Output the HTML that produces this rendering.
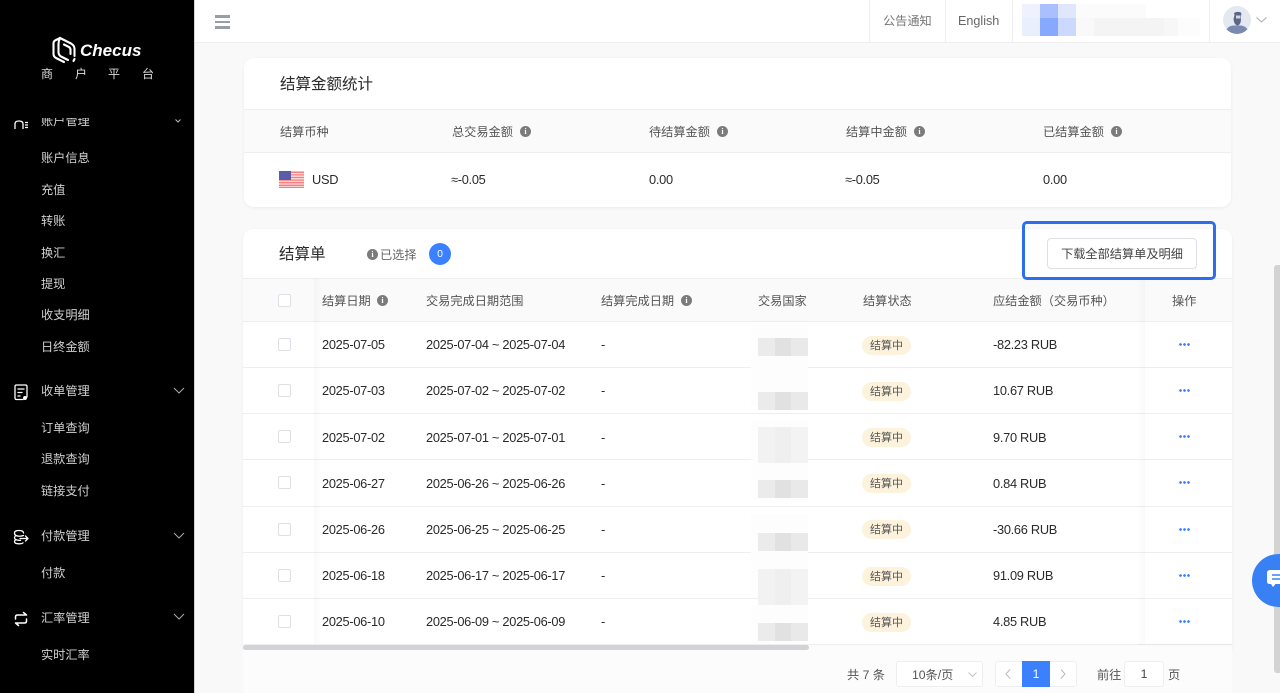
<!DOCTYPE html>
<html lang="zh-CN"><head><meta charset="utf-8"><title>结算单</title>
<style>
*{box-sizing:border-box;margin:0;padding:0}
html,body{width:1280px;height:693px;overflow:hidden;background:#f9f9f9;font-family:"Liberation Sans","Noto Sans CJK SC",sans-serif;font-size:12.2px;color:#2a2a2a}
.a{position:absolute}
.t{position:absolute;white-space:nowrap;line-height:16px;transform:translateY(-7px)}
.r .t,.n{font-size:12.8px;letter-spacing:-.28px}
#side{left:0;top:0;width:194px;height:693px;background:#000;color:#c8c8c8}
#side .t{color:#d0d0d0}
#clip{left:0;top:118px;width:194px;height:575px;overflow:hidden}
#hdr{left:195px;top:0;width:1085px;height:43px;background:#fff;border-bottom:1px solid #eee}
.div{position:absolute;top:0;width:1px;height:42px;background:#eee}
.bl{position:absolute}
.card{position:absolute;background:#fff;border-radius:10px;box-shadow:0 1px 3px rgba(0,0,0,.06)}
.th{color:#555}
.info{position:absolute;width:11px;height:11px;border-radius:50%;background:#7b7b7d;color:#fff;font:bold 8px/11px "Liberation Serif",serif;text-align:center}
.line{position:absolute;left:243px;width:989px;height:1px;background:#eeeeee}
.cb{position:absolute;left:278px;width:13px;height:13px;border:1px solid #dfe0e5;border-radius:2px;background:#fff}
.badge{position:absolute;left:862px;width:49px;height:19px;border-radius:10px;background:#fdf3dd;color:#555;font-size:11px;line-height:20px;text-align:center}
.dots{position:absolute;left:1179px;width:11px;height:3px;background:radial-gradient(circle at 1.5px 1.5px,#3a80ff 1.2px,transparent 1.5px) 0 0/4px 3px repeat-x}
.gr{position:absolute;left:758px;width:50px;background:linear-gradient(90deg,#ebebeb 0,#ebebeb 17px,#e1e1e1 17px,#e1e1e1 33px,#e9e9e9 33px)}
.gl{position:absolute;left:758px;width:50px;background:linear-gradient(90deg,#f2f2f2 0,#f2f2f2 17px,#efefef 17px,#efefef 33px,#f3f3f3 33px)}
.halo{position:absolute;left:751px;width:57px;background:#fdfdfd}
.pg{position:absolute;background:#fff;border:1px solid #eeeef0;border-radius:3px}
</style></head><body>

<div class="a" id="side">
<svg class="a" style="left:51px;top:36px" width="26" height="28" viewBox="0 0 26 28" fill="none" stroke="#fff" stroke-width="2.100" stroke-linejoin="round" stroke-linecap="round"><path d="M9 2 L20 7.500 Q23.500 9.500 23.500 13 V20"/><path d="M13 26 L5 22 Q2.500 20.500 2.500 18 V7.500 Q2.500 5 5 4 L9 2"/><path d="M9 2 Q7.500 5 7.500 8 V16 Q7.500 19 10 20.500 L17 24"/><path d="M13 8.500 L18 11 Q19.500 12 19.500 14 V18"/><path d="M23.500 23 L22.500 25"/></svg>
<div class="t" style="left:80px;top:50px;font:italic bold 17px/16px 'Liberation Sans',sans-serif;color:#fff">Checus</div>
<div class="t" style="left:41px;top:73px;color:#ddd;font-size:12px">商</div>
<div class="t" style="left:75px;top:73px;color:#ddd;font-size:12px">户</div>
<div class="t" style="left:108px;top:73px;color:#ddd;font-size:12px">平</div>
<div class="t" style="left:142px;top:73px;color:#ddd;font-size:12px">台</div>

<div class="a" id="clip">
 <svg class="a" style="left:14px;top:0" width="14" height="11" viewBox="0 0 14 11" fill="none" stroke="#fff" stroke-width="1.300"><path d="M1 11 V6 Q1 3 5 3 Q9 3 9 6 V11"/><path d="M11 4.500 h3 M11 7 h3 M11 9.500 h3"/></svg>
 <div class="t" style="left:41px;top:2px">账户管理</div>
 <svg class="a" style="left:175px;top:1px" width="6" height="4" viewBox="0 0 6 4" fill="none" stroke="#bbb"><path d="M.5 .5 3 3 5.500 .5"/></svg>
</div>
<div class="t" style="left:41px;top:157px">账户信息</div>
<div class="t" style="left:41px;top:189px">充值</div>
<div class="t" style="left:41px;top:220px">转账</div>
<div class="t" style="left:41px;top:252px">换汇</div>
<div class="t" style="left:41px;top:283px">提现</div>
<div class="t" style="left:41px;top:314px">收支明细</div>
<div class="t" style="left:41px;top:346px">日终金额</div>

<svg class="a" style="left:14px;top:384px" width="14" height="17" viewBox="0 0 14 17" fill="none" stroke="#fff" stroke-width="1.300" stroke-linecap="round" stroke-linejoin="round"><path d="M9 15.500 H2.500 Q1 15.500 1 14 V2.500 Q1 1 2.500 1 H11.500 Q13 1 13 2.500 V13"/><path d="M4 5 H10 M4 8.500 H8 M4 12 H6"/><circle cx="11" cy="14" r="1.300" fill="#fff"/></svg>
<div class="t" style="left:41px;top:390px">收单管理</div>
<svg class="a" style="left:173px;top:387px" width="12" height="7" viewBox="0 0 12 7" fill="none" stroke="#aaa"><path d="M1 1 6 6 11 1"/></svg>
<div class="t" style="left:41px;top:427px">订单查询</div>
<div class="t" style="left:41px;top:458px">退款查询</div>
<div class="t" style="left:41px;top:490px">链接支付</div>

<svg class="a" style="left:13px;top:529px" width="16" height="16" viewBox="0 0 16 16" fill="none" stroke="#fff" stroke-width="1.300" stroke-linecap="round"><path d="M10.500 4 Q10.500 1.500 6 1.500 T1.500 4 Q1.500 6 3 6.500 Q1.500 7.500 1.500 8.500 Q1.500 10 3 10.800 Q1.500 11.500 1.500 12.500 Q1.500 14.800 6 14.800 Q9 14.800 10 13.800"/><path d="M3 6.500 Q6 8 10.500 6.500 M3 10.800 Q5 11.500 7.500 11.300 M7 9.500 H15 M12.500 7 L15 9.500 L12.500 12"/></svg>
<div class="t" style="left:41px;top:535px">付款管理</div>
<svg class="a" style="left:173px;top:532px" width="12" height="7" viewBox="0 0 12 7" fill="none" stroke="#aaa"><path d="M1 1 6 6 11 1"/></svg>
<div class="t" style="left:41px;top:572px">付款</div>

<svg class="a" style="left:14px;top:611px" width="14" height="16" viewBox="0 0 14 16" fill="none" stroke="#fff" stroke-width="1.500" stroke-linecap="round" stroke-linejoin="round"><path d="M1.500 8 V6 Q1.500 4 3.500 4 H12.500 L9.500 1.500"/><path d="M12.500 8 V10 Q12.500 12 10.500 12 H1.500 L4.500 14.500"/></svg>
<div class="t" style="left:41px;top:617px">汇率管理</div>
<svg class="a" style="left:173px;top:613px" width="12" height="7" viewBox="0 0 12 7" fill="none" stroke="#aaa"><path d="M1 1 6 6 11 1"/></svg>
<div class="t" style="left:41px;top:654px">实时汇率</div>
</div>
<div class="a" style="left:194px;top:0;width:1px;height:693px;background:#d5d5d5"></div>

<div class="a" id="hdr"></div>
<div class="a" style="left:215px;top:15px;width:15px;height:2.500px;background:#9b9da6"></div>
<div class="a" style="left:215px;top:20.500px;width:15px;height:2.500px;background:#9b9da6"></div>
<div class="a" style="left:215px;top:26px;width:15px;height:2.500px;background:#9b9da6"></div>
<div class="div" style="left:869px"></div><div class="div" style="left:945px"></div><div class="div" style="left:1012px"></div><div class="div" style="left:1209px"></div>
<div class="t" style="left:883px;top:19.500px;color:#777">公告通知</div>
<div class="t" style="left:958px;top:19.500px;color:#666;font-size:12.600px">English</div>
<div class="bl" style="left:1022px;top:4px;width:18px;height:14px;background:#eff2fe"></div>
<div class="bl" style="left:1040px;top:4px;width:18px;height:14px;background:#a9c0fd"></div>
<div class="bl" style="left:1058px;top:4px;width:18px;height:14px;background:#e0e7fd"></div>
<div class="bl" style="left:1076px;top:4px;width:70px;height:14px;background:#fbfbfb"></div>
<div class="bl" style="left:1022px;top:18px;width:18px;height:18px;background:#eaeffe"></div>
<div class="bl" style="left:1040px;top:18px;width:18px;height:18px;background:#86a8ff"></div>
<div class="bl" style="left:1058px;top:18px;width:18px;height:18px;background:#ccd8fd"></div>
<div class="bl" style="left:1076px;top:18px;width:18px;height:18px;background:#f9f9f9"></div>
<div class="bl" style="left:1094px;top:18px;width:70px;height:18px;background:#f4f4f4"></div>
<div class="bl" style="left:1164px;top:18px;width:14px;height:18px;background:#f7f7f7"></div>
<div class="bl" style="left:1178px;top:18px;width:22px;height:18px;background:#fcfcfc"></div>
<svg class="a" style="left:1223px;top:6px" width="28" height="28" viewBox="0 0 28 28"><defs><clipPath id="c"><circle cx="14" cy="14" r="14"/></clipPath></defs><g clip-path="url(#c)"><rect width="28" height="28" fill="#e4e8f0"/><path d="M2 28 Q3 20.500 10 19.500 L18 19.500 Q25 20.500 26 28Z" fill="#7a89af"/><path d="M11 7 Q14 5 18 6.500 L18.500 9 H11.500Z" fill="#5b6789"/><path d="M11.500 9 H18 V13 Q18 19 14.500 19.500 Q11 19 10.500 13Z" fill="#5b6789"/><path d="M13 9.500 H17.500 V12.500 H13Z" fill="#d3d7e0"/></g></svg>
<svg class="a" style="left:1256px;top:17px" width="11" height="6" viewBox="0 0 11 6" fill="none" stroke="#aaa"><path d="M.5 .5 5.500 5 10.500 .5"/></svg>

<div class="card" style="left:244px;top:58px;width:987px;height:149px"></div>
<div class="a" style="left:244px;top:109px;width:987px;height:44px;background:#fafafa;border-top:1px solid #efefef;border-bottom:1px solid #efefef"></div>
<div class="t" style="left:280px;top:83.500px;font-size:15.500px;color:#2a2a2a">结算金额统计</div>
<div class="t th" style="left:280px;top:130.500px">结算币种</div>
<div class="t th" style="left:452px;top:130.500px">总交易金额</div><div class="info" style="left:520px;top:126px">i</div>
<div class="t th" style="left:649px;top:130.500px">待结算金额</div><div class="info" style="left:717px;top:126px">i</div>
<div class="t th" style="left:846px;top:130.500px">结算中金额</div><div class="info" style="left:914px;top:126px">i</div>
<div class="t th" style="left:1043px;top:130.500px">已结算金额</div><div class="info" style="left:1111px;top:126px">i</div>
<svg class="a" style="left:279px;top:171px" width="25" height="17" viewBox="0 0 25 17"><rect width="25" height="17" fill="#fbdcdc"/><path d="M0 1.300H25M0 3.900H25M0 6.500H25M0 9.100H25M0 11.700H25M0 14.300H25M0 16.500H25" stroke="#f47f80" stroke-width="1.300"/><rect width="12" height="9" fill="#5a5ea8"/></svg>
<div class="t n" style="left:312px;top:179px">USD</div>
<div class="t n" style="left:451px;top:179px">≈-0.05</div>
<div class="t n" style="left:649px;top:179px">0.00</div>
<div class="t n" style="left:845px;top:179px">≈-0.05</div>
<div class="t n" style="left:1043px;top:179px">0.00</div>

<div class="card" style="left:243px;top:229px;width:989px;height:420px;border-radius:10px 10px 0 0"></div>
<div class="a" style="left:243px;top:645px;width:989px;height:48px;background:#fcfcfc"></div>
<div class="t" style="left:279px;top:253.500px;font-size:15.500px;color:#2a2a2a">结算单</div>
<div class="info" style="left:367px;top:249px">i</div>
<div class="t" style="left:380px;top:253.500px;color:#666">已选择</div>
<div class="a" style="left:429px;top:243px;width:22px;height:22px;border-radius:50%;background:#3a80ff;color:#fff;font-size:10.500px;line-height:22px;text-align:center">0</div>

<div class="a" style="left:243px;top:278px;width:989px;height:44px;background:#fafafa;border-top:1px solid #eee;border-bottom:1px solid #eee"></div>
<div class="line" style="top:367px"></div><div class="line" style="top:413px"></div><div class="line" style="top:459px"></div><div class="line" style="top:506px"></div><div class="line" style="top:552px"></div><div class="line" style="top:598px"></div><div class="line" style="top:644px"></div>

<div class="a" style="left:314px;top:279px;width:8px;height:365px;background:linear-gradient(90deg,rgba(0,0,0,.025),rgba(0,0,0,0))"></div>
<div class="a" style="left:1137px;top:279px;width:8px;height:365px;background:linear-gradient(270deg,rgba(0,0,0,.025),rgba(0,0,0,0))"></div>
<div class="a" style="left:1138px;top:644px;width:94px;height:2px;background:linear-gradient(180deg,rgba(0,0,0,.04),rgba(0,0,0,0))"></div>

<div class="halo" style="top:325px;height:80px"></div><div class="halo" style="top:420px;height:80px"></div><div class="halo" style="top:515px;height:80px"></div><div class="halo" style="top:605px;height:39px"></div>
<div class="gr" style="top:338px;height:18px"></div>
<div class="gr" style="top:392px;height:18px"></div>
<div class="gl" style="top:427px;height:36px"></div>
<div class="gr" style="top:480px;height:18px"></div>
<div class="gr" style="top:533px;height:18px"></div>
<div class="gl" style="top:569px;height:36px"></div>
<div class="gr" style="top:623px;height:18px"></div>

<div class="cb" style="top:294px"></div>
<div class="t th" style="left:322px;top:299.500px">结算日期</div><div class="info" style="left:377px;top:295px">i</div>
<div class="t th" style="left:426px;top:299.500px">交易完成日期范围</div>
<div class="t th" style="left:601px;top:299.500px">结算完成日期</div><div class="info" style="left:681px;top:295px">i</div>
<div class="t th" style="left:758px;top:299.500px">交易国家</div>
<div class="t th" style="left:863px;top:299.500px">结算状态</div>
<div class="t th" style="left:993px;top:299.500px">应结金额（交易币种）</div>
<div class="t th" style="left:1172px;top:299.500px">操作</div>

<div class="r"><div class="cb" style="top:338px"></div><div class="t" style="left:322px;top:344px">2025-07-05</div><div class="t" style="left:426px;top:344px">2025-07-04 ~ 2025-07-04</div><div class="t" style="left:601px;top:344px">-</div><div class="badge" style="top:336px">结算中</div><div class="t" style="left:993px;top:344px">-82.23 RUB</div><div class="dots" style="top:343px"></div></div>
<div class="r"><div class="cb" style="top:384px"></div><div class="t" style="left:322px;top:390px">2025-07-03</div><div class="t" style="left:426px;top:390px">2025-07-02 ~ 2025-07-02</div><div class="t" style="left:601px;top:390px">-</div><div class="badge" style="top:382px">结算中</div><div class="t" style="left:993px;top:390px">10.67 RUB</div><div class="dots" style="top:389px"></div></div>
<div class="r"><div class="cb" style="top:430px"></div><div class="t" style="left:322px;top:437px">2025-07-02</div><div class="t" style="left:426px;top:437px">2025-07-01 ~ 2025-07-01</div><div class="t" style="left:601px;top:437px">-</div><div class="badge" style="top:428px">结算中</div><div class="t" style="left:993px;top:437px">9.70 RUB</div><div class="dots" style="top:435px"></div></div>
<div class="r"><div class="cb" style="top:476px"></div><div class="t" style="left:322px;top:483px">2025-06-27</div><div class="t" style="left:426px;top:483px">2025-06-26 ~ 2025-06-26</div><div class="t" style="left:601px;top:483px">-</div><div class="badge" style="top:474px">结算中</div><div class="t" style="left:993px;top:483px">0.84 RUB</div><div class="dots" style="top:481px"></div></div>
<div class="r"><div class="cb" style="top:523px"></div><div class="t" style="left:322px;top:529px">2025-06-26</div><div class="t" style="left:426px;top:529px">2025-06-25 ~ 2025-06-25</div><div class="t" style="left:601px;top:529px">-</div><div class="badge" style="top:520px">结算中</div><div class="t" style="left:993px;top:529px">-30.66 RUB</div><div class="dots" style="top:528px"></div></div>
<div class="r"><div class="cb" style="top:569px"></div><div class="t" style="left:322px;top:575px">2025-06-18</div><div class="t" style="left:426px;top:575px">2025-06-17 ~ 2025-06-17</div><div class="t" style="left:601px;top:575px">-</div><div class="badge" style="top:567px">结算中</div><div class="t" style="left:993px;top:575px">91.09 RUB</div><div class="dots" style="top:574px"></div></div>
<div class="r"><div class="cb" style="top:615px"></div><div class="t" style="left:322px;top:621px">2025-06-10</div><div class="t" style="left:426px;top:621px">2025-06-09 ~ 2025-06-09</div><div class="t" style="left:601px;top:621px">-</div><div class="badge" style="top:613px">结算中</div><div class="t" style="left:993px;top:621px">4.85 RUB</div><div class="dots" style="top:620px"></div></div>

<div class="a" style="left:243px;top:645px;width:566px;height:5px;border-radius:3px;background:#d2d2d7"></div>

<div class="a" style="left:1047px;top:238px;width:150px;height:31px;background:#fff;border:1px solid #dfe0e6;border-radius:4px;color:#444;line-height:31px;text-align:center">下载全部结算单及明细</div>
<div class="a" style="left:1022px;top:221px;width:194px;height:59px;border:3px solid #2b6fef;border-radius:5px"></div>

<div class="t" style="left:847px;top:673.500px;color:#555">共 7 条</div>
<div class="pg" style="left:896px;top:661px;width:87px;height:26px"></div>
<div class="t" style="left:912px;top:673.500px;color:#555">10条/页</div>
<svg class="a" style="left:968px;top:672px" width="9" height="5" viewBox="0 0 9 5" fill="none" stroke="#c5c5c5"><path d="M.5 .5 4.500 4.500 8.500 .5"/></svg>
<div class="pg" style="left:995px;top:661px;width:82px;height:26px"></div>
<svg class="a" style="left:1005px;top:669px" width="6" height="10" viewBox="0 0 6 10" fill="none" stroke="#bbb"><path d="M5 .5 1 5 5 9.500"/></svg>
<div class="a" style="left:1022px;top:661px;width:28px;height:26px;background:#3a80ff;color:#fff;line-height:26px;text-align:center">1</div>
<svg class="a" style="left:1060px;top:669px" width="6" height="10" viewBox="0 0 6 10" fill="none" stroke="#bbb"><path d="M1 .5 5 5 1 9.500"/></svg>
<div class="t" style="left:1097px;top:673.500px;color:#555">前往</div>
<div class="pg" style="left:1124px;top:661px;width:40px;height:26px;line-height:25px;text-align:center;color:#444">1</div>
<div class="t" style="left:1168px;top:673.500px;color:#555">页</div>

<div class="a" style="left:1274px;top:265px;width:6px;height:408px;border-radius:3px 0 0 3px;background:#d3d3d3"></div>
<div class="a" style="left:1252px;top:554px;width:53px;height:53px;border-radius:50%;background:#3a80f5"></div>
<svg class="a" style="left:1266px;top:569px" width="14" height="21" viewBox="0 0 14 21"><path d="M14 1 H4 Q1 1 1 4 V13 Q1 15 4 15 H5 L7 18 L9.500 15 H14Z" fill="#fff"/><path d="M6 6 H14 M6 10 H14" stroke="#3a80f5" stroke-width="1.500"/></svg>
</body></html>
